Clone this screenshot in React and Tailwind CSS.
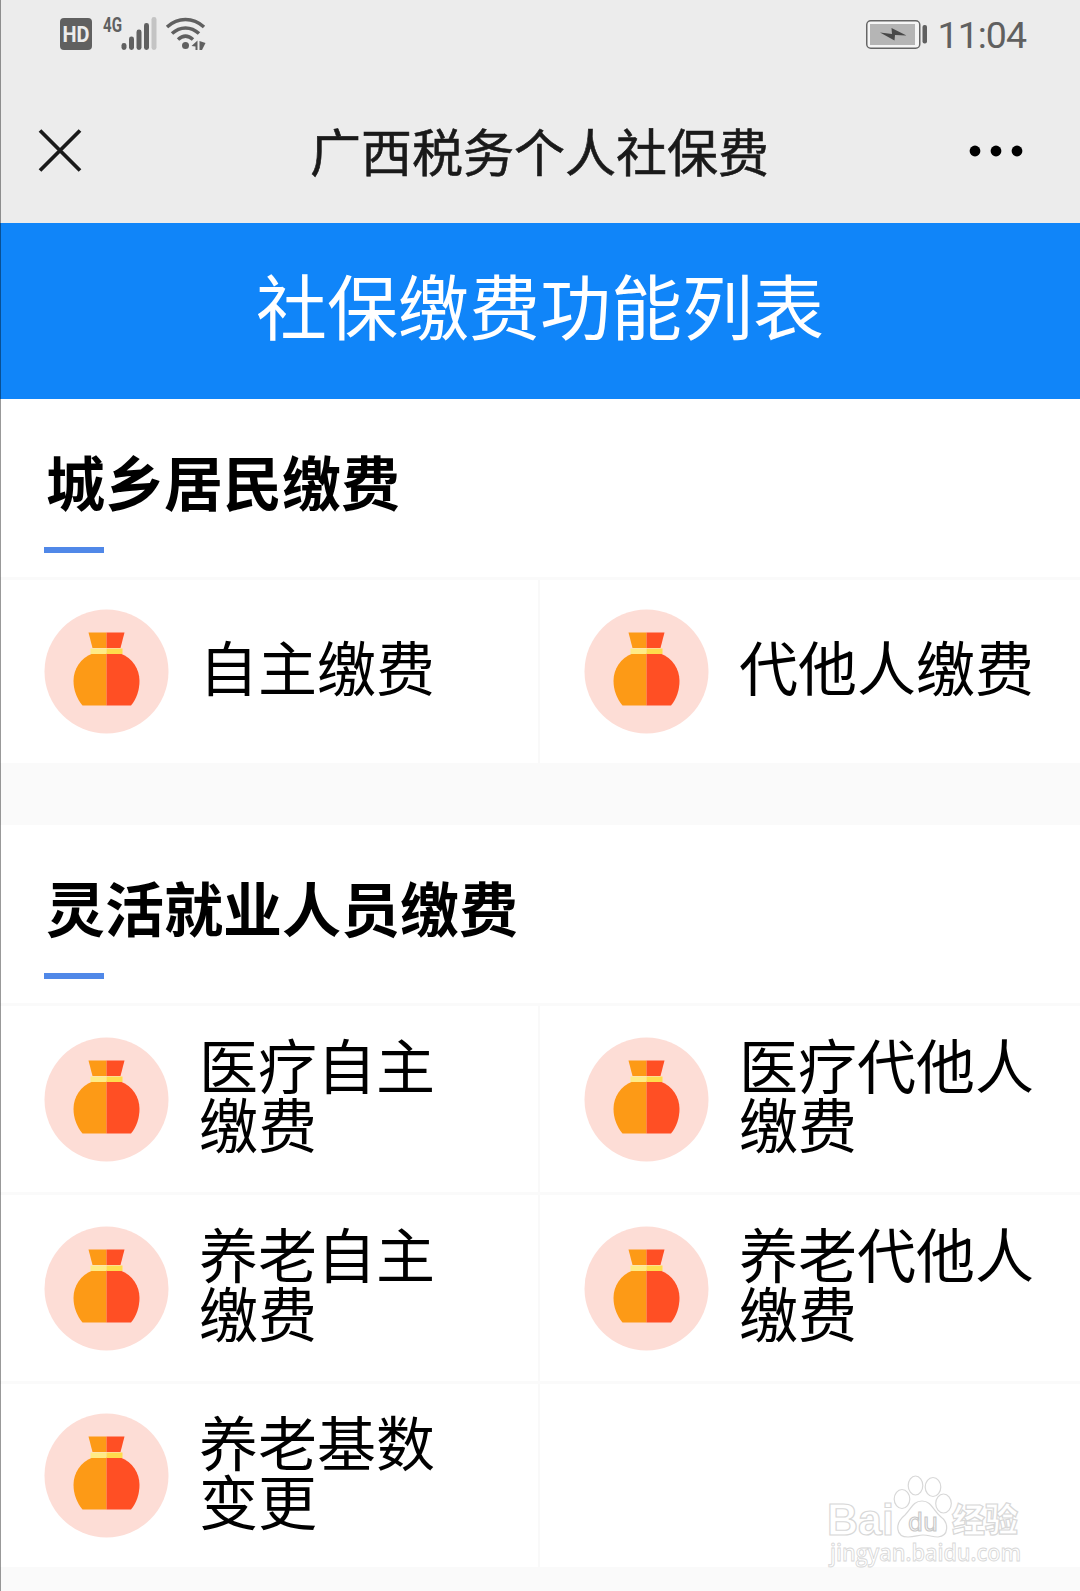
import { Fragment } from 'react'

const SECTIONS = [
  {
    title: '城乡居民缴费',
    rows: [
      { height: 'h-[183px]', cells: ['自主缴费', '代他人缴费'] },
    ],
  },
  {
    title: '灵活就业人员缴费',
    rows: [
      { height: 'h-[186px]', cells: ['医疗自主缴费', '医疗代他人缴费'] },
      { height: 'h-[186px]', cells: ['养老自主缴费', '养老代他人缴费'] },
      { height: 'h-[183px]', cells: ['养老基数变更', null] },
    ],
  },
]

function MoneyBag() {
  return (
    <svg className="h-[125px] w-[125px] shrink-0" viewBox="0 0 125 125">
      <circle cx="62.5" cy="62.5" r="62" fill="#fdddd6" />
      <path d="M44.5 23.500H62.5V39H48.5Z" fill="#fd9a16" />
      <path d="M62.5 23.500H80.5L76.5 39H62.5Z" fill="#ff4f24" />
      <path d="M62.5 44.500H48.500C36.500 49 29.500 60 29.500 72C29.500 81 33 90 38.500 96.500H62.500Z" fill="#fd9a16" />
      <path d="M62.500 44.500H76.500C88.500 49 95.500 60 95.500 72C95.500 81 92.500 90 87 96.500H62.500Z" fill="#ff4f24" />
      <path d="M46.500 39.500H62.500V45H46.500Z" fill="#ffec86" />
      <path d="M62.500 39.500H78.500V45H62.500Z" fill="#ffdc4c" />
    </svg>
  )
}

function StatusBar() {
  return (
    <div className="flex h-[70px] items-start justify-between pl-[59px] pr-[54px] text-[#606060]">
      <svg width="150" height="60" viewBox="59 0 150 60" fill="currentColor">
        <rect x="60" y="18" width="32" height="32" rx="4" />
        <text x="76" y="41.500" textAnchor="middle" textLength="27" lengthAdjust="spacingAndGlyphs" fill="#ececec" fontFamily="Roboto" fontWeight="700" fontSize="21.500">HD</text>
        <text x="103" y="31.500" textLength="19" lengthAdjust="spacingAndGlyphs" fontFamily="Roboto" fontWeight="700" fontSize="20.500">4G</text>
        <rect x="121.500" y="43" width="5" height="7" rx="2.400" />
        <rect x="129" y="36.500" width="5" height="13.500" rx="2.400" />
        <rect x="136.500" y="29.500" width="5" height="20.500" rx="2.400" />
        <rect x="144" y="23" width="5" height="27" rx="2.400" />
        <rect x="151.500" y="17" width="5" height="33" rx="2.400" fill="#c4c4c4" />
        <g fill="none" stroke="currentColor" strokeWidth="3.500">
          <path d="M167 27C178 17 193 17 204 27" />
          <path d="M172 33.500C180 26 191 26 199 33.500" />
          <path d="M178 39.500C183 35 188 35 193 39.500" />
        </g>
        <circle cx="185.500" cy="45.500" r="3.500" />
        <path d="M191.500 46L197.500 40.500V50H195.500V46.500Z" />
        <path d="M199.500 41L205.500 43L202 50H199.500Z" />
      </svg>
      <div className="flex items-start">
        <svg width="64" height="60" viewBox="865 0 64 60">
          <rect x="866.750" y="20.750" width="53" height="27.500" rx="4" fill="#f5f5f5" stroke="#666" strokeWidth="1.500" />
          <rect x="870" y="24" width="45" height="21" fill="#b5b5b5" />
          <path d="M880 32.500L892 34L891.500 28L906.500 35.500L895 35L894.500 40.500Z" fill="#484848" />
          <rect x="922.500" y="25" width="4.500" height="18.500" rx="2" fill="#606060" />
        </svg>
        <span className="ml-[9px] mt-[13px] font-[Roboto] text-[37.5px] leading-[44px] tracking-[-1px]">11:04</span>
      </div>
    </div>
  )
}

function NavBar() {
  return (
    <div className="grid h-[153px] grid-cols-[1fr_auto_1fr] items-start pl-[37px] pr-[38px]">
      <svg className="mt-[58px]" width="46" height="46" viewBox="0 0 46 46" stroke="#1a1a1a" strokeWidth="3.800">
        <path d="M3 2.500L43 42.500M43 2.500L3 42.500" />
      </svg>
      <h1 className="mt-[43px] text-[51px] leading-[74px] text-[#1a1a1a] [-webkit-text-stroke:0.6px_#1a1a1a]">广西税务个人社保费</h1>
      <svg className="mr-[18px] mt-[75px] justify-self-end" width="56" height="12" viewBox="0 0 56 12">
        <circle cx="7" cy="6" r="5.400" />
        <circle cx="28" cy="6" r="5.400" />
        <circle cx="49" cy="6" r="5.400" />
      </svg>
    </div>
  )
}

function Cell({ label }) {
  if (!label) return <div />
  return (
    <div className="flex items-center pl-[44px] pr-[45px]">
      <MoneyBag />
      <div className="mb-[12px] ml-[30px] flex-1 break-all text-[59px] leading-[59px]">{label}</div>
    </div>
  )
}

function Section({ title, rows }) {
  return (
    <section className="bg-white">
      <div className="flex h-[178px] flex-col items-start pl-[44px] pt-[47px]">
        <h2 className="ml-[2px] h-[101px] text-[59px] font-bold leading-[70px]">{title}</h2>
        <div className="h-[6px] w-[60px] bg-[#5088e8]" />
      </div>
      {rows.map((row, i) => (
        <Fragment key={i}>
          <div className="h-[3px] bg-[#fafafa]" />
          <div className={`grid grid-cols-[538px_2px_540px] ${row.height}`}>
            <Cell label={row.cells[0]} />
            <div className="bg-[#f9f9f9]" />
            <Cell label={row.cells[1]} />
          </div>
        </Fragment>
      ))}
    </section>
  )
}

function Watermark() {
  return (
    <svg className="absolute left-[824px] top-[1470px]" width="210" height="105" viewBox="824 1470 210 105" fill="#fff" stroke="#d8d8d8" strokeWidth="1.200">
      <text x="827" y="1535" textLength="67" lengthAdjust="spacingAndGlyphs" fontFamily="Liberation Sans" fontWeight="700" fontSize="44">Bai</text>
      <ellipse cx="902" cy="1499" rx="7.800" ry="9.500" />
      <ellipse cx="915.500" cy="1485.500" rx="7.300" ry="9.500" />
      <ellipse cx="933" cy="1487" rx="7.800" ry="9.500" />
      <ellipse cx="943.500" cy="1503.500" rx="7.800" ry="9.500" />
      <path d="M922 1501C913 1501 911 1509 905 1515C894 1524 896 1537 908 1537C915 1537 918 1535 923 1535C929 1535 932 1537 938 1537C949 1536 949 1523 941 1517C933 1511 932 1501 922 1501Z" />
      <text x="908" y="1531" textLength="30" lengthAdjust="spacingAndGlyphs" fontFamily="DejaVu Sans" fontSize="25" stroke="#c8c8c8">du</text>
      <text x="952" y="1532" textLength="66" lengthAdjust="spacingAndGlyphs" fontFamily="Noto Sans CJK SC" fontWeight="900" fontSize="33">经验</text>
      <text x="830" y="1561" textLength="191" lengthAdjust="spacingAndGlyphs" fontFamily="Open Sans" fontWeight="600" fontSize="23" strokeWidth="0.900">jingyan.baidu.com</text>
    </svg>
  )
}

export default function App() {
  return (
    <div className="relative h-[1591px] w-[1080px] overflow-hidden bg-[#fafafa] font-['Noto_Sans_CJK_SC',sans-serif] text-black">
      <header className="bg-[#ececec]">
        <StatusBar />
        <NavBar />
      </header>
      <div className="flex h-[176px] justify-center bg-[#1085f9] pt-[38px] text-[71px] leading-[84px] text-white">
        社保缴费功能列表
      </div>
      <main className="flex flex-col gap-[62px]">
        {SECTIONS.map((section) => <Section key={section.title} {...section} />)}
      </main>
      <Watermark />
      <div className="absolute inset-y-0 left-0 w-px bg-black/40" />
    </div>
  )
}
